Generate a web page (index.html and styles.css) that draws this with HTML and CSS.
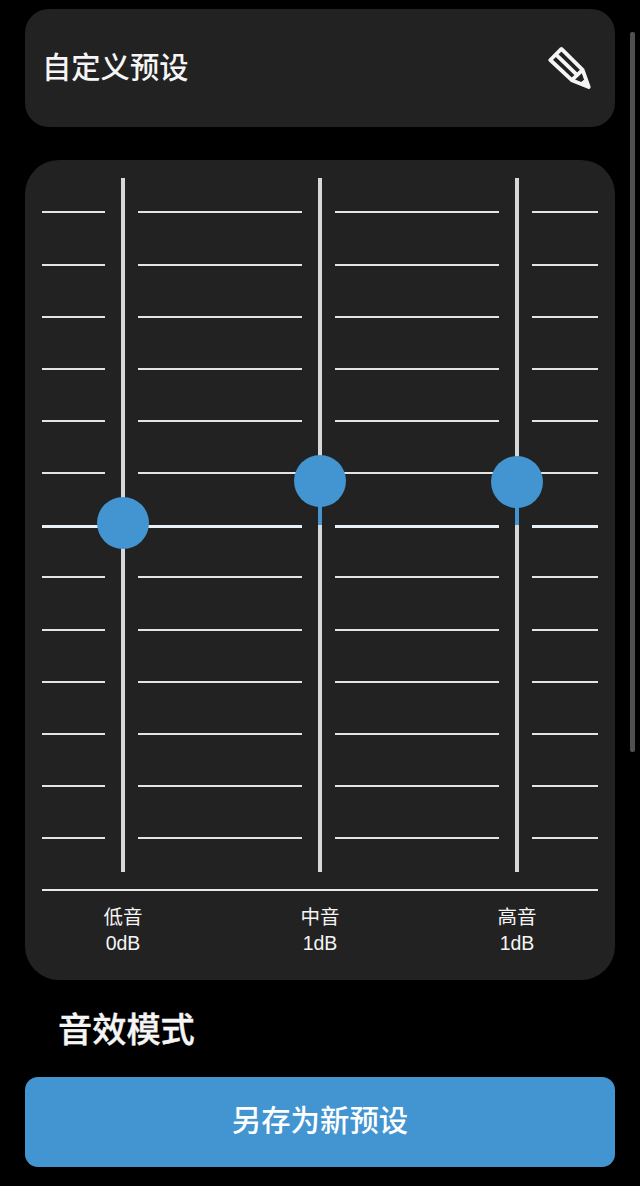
FILE: index.html
```html
<!DOCTYPE html>
<html lang="zh">
<head>
    <meta charset="UTF-8">
    <meta name="viewport" content="width=device-width, initial-scale=1.0">
    <title>自定义预设</title>
    <link rel="stylesheet" href="styles.css">
</head>
<body>
    <!-- 预设名称 -->
    <div class="preset">
        <span class="preset-name">自定义预设</span>
        <svg class="edit" viewBox="0 0 44 44">
            <path d="M13.4 2.9L2.3 14L23.8 34.2L40.7 41L34.6 23.8Z"/>
            <path d="M7.8 8.4L29 28.8M23.8 34.2L34.6 23.8"/>
            <path class="tip" d="M37.5 33L41 41.3L32 37.5Z"/>
        </svg>
    </div>
    <!-- 均衡器 -->
    <div class="equalizer">
        <div class="chart">
            <!-- 刻度线 -->
            <ul class="scale">
                <li></li>
                <li></li>
                <li></li>
                <li></li>
                <li></li>
                <li></li>
                <li class="zero"></li>
                <li></li>
                <li></li>
                <li></li>
                <li></li>
                <li></li>
                <li></li>
            </ul>
            <!-- 三个滑块 -->
            <div class="sliders">
                <div class="slider bass">
                    <div class="track"></div>
                    <div class="thumb"></div>
                </div>
                <div class="slider middle">
                    <div class="track"></div>
                    <div class="fill"></div>
                    <div class="thumb"></div>
                </div>
                <div class="slider treble">
                    <div class="track"></div>
                    <div class="fill"></div>
                    <div class="thumb"></div>
                </div>
            </div>
        </div>
        <div class="labels">
            <div class="label">低音<br>0dB</div>
            <div class="label">中音<br>1dB</div>
            <div class="label">高音<br>1dB</div>
        </div>
    </div>
    <h2 class="title">音效模式</h2>
    <button class="save">另存为新预设</button>
    <div class="scrollbar"></div>
</body>
</html>
```

FILE: styles.css
```css
*{
    margin: 0;
    padding: 0;
    box-sizing: border-box;
}
body{
    width: 640px;
    height: 1186px;
    padding: 9px 25px 0;
    background-color: #000;
    color: #f5f5f5;
    font-family: "Liberation Sans", "Noto Sans CJK SC", sans-serif;
    overflow: hidden;
}
.preset{
    display: flex;
    justify-content: space-between;
    align-items: center;
    height: 118px;
    padding: 0 23px 0 17px;
    border-radius: 24px;
    background-color: #222;
}
.preset-name{
    font-size: 29.3px;
    font-weight: 500;
    line-height: 40px;
}
.edit{
    width: 44px;
    height: 44px;
    fill: none;
    stroke: #f5f5f5;
    stroke-width: 3.8;
    stroke-linejoin: round;
}
.edit .tip{
    fill: #f5f5f5;
    stroke-width: 1;
}
.equalizer{
    height: 820px;
    margin-top: 33px;
    padding: 18px 17.5px 0 17px;
    border-radius: 34px;
    background-color: #222;
}
/* 刻度线和滑块叠放在同一个网格里 */
.chart{
    display: grid;
    height: 713.4px;
    border-bottom: 2px solid #e8e8e8;
}
.scale{
    grid-area: 1 / 1;
    padding-top: 33.4px;
    list-style: none;
}
.scale li{
    height: 52.17px;
    border-top: 2px solid #e4e4e4;
}
.scale .zero{
    height: 51.17px;
    margin-top: 1px;
    border-top: 3px solid #e6f0f6;
}
.sliders{
    grid-area: 1 / 1;
    display: grid;
    grid-template-columns: 63px 33px 164px 33px 164px 33px;
    height: 694px;
}
.slider{
    position: relative;
    padding-left: 16px;
    background-color: #222;
}
.bass{
    grid-column: 2;
}
.middle{
    grid-column: 4;
}
.treble{
    grid-column: 6;
}
.track{
    width: 4px;
    height: 100%;
    background-color: #d8d8d8;
}
.thumb{
    position: absolute;
    left: -8px;
    top: 319px;
    width: 52px;
    height: 52px;
    border-radius: 50%;
    background-color: #4295d1;
}
.middle .thumb{
    top: 277px;
}
.treble .thumb{
    top: 278px;
}
.fill{
    position: absolute;
    left: 16px;
    top: 303px;
    width: 4px;
    height: 44px;
    background-color: #4295d1;
}
.labels{
    display: flex;
    margin: 13px 0 0 -17.5px;
}
.label{
    flex: none;
    width: 197px;
    font-size: 19.5px;
    line-height: 26px;
    text-align: center;
}
.title{
    margin: 25px 0 0 33px;
    font-size: 34.2px;
    font-weight: 500;
    line-height: 50px;
    -webkit-text-stroke: 0.4px #f5f5f5;
}
.save{
    display: block;
    width: 100%;
    height: 90px;
    margin-top: 22px;
    padding-bottom: 9px;
    border: none;
    border-radius: 13px;
    background-color: #4295d1;
    color: #fff;
    font-family: inherit;
    font-size: 29.4px;
    font-weight: 500;
}
.scrollbar{
    position: fixed;
    left: 630px;
    top: 32px;
    width: 5px;
    height: 720px;
    border-radius: 2px;
    background-color: #505050;
}
```
